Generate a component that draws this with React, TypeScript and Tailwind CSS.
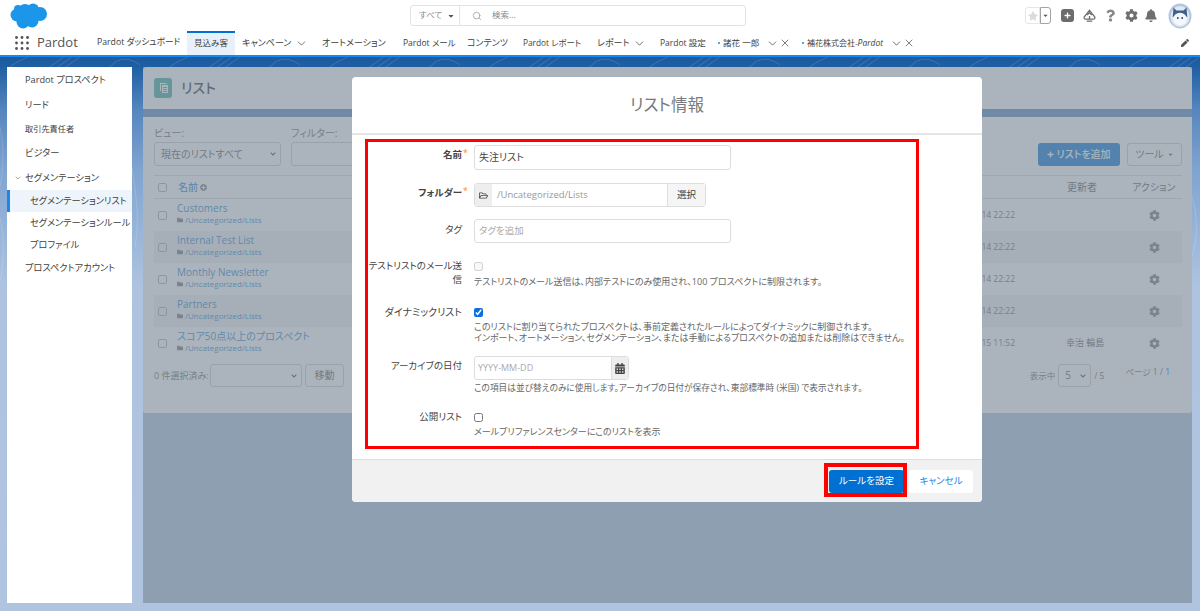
import { FaCalendarAlt, FaCaretDown, FaCog, FaFolder, FaPlus, FaQuestion, FaRegFolderOpen, FaStar, FaBell, FaPen, FaChevronDown, FaPlusCircle } from "react-icons/fa";
import { LuChevronDown, LuSearch, LuX } from "react-icons/lu";

const ROWS = [
  { name: "Customers", date: "2020-10-14 22:22", user: "" },
  { name: "Internal Test List", date: "2020-10-14 22:22", user: "" },
  { name: "Monthly Newsletter", date: "2020-10-14 22:22", user: "" },
  { name: "Partners", date: "2020-10-14 22:22", user: "" },
  { name: "スコア50点以上のプロスペクト", date: "2020-10-15 11:52", user: "幸治 輪島" },
];

function Logo() {
  return (
    <svg viewBox="0 0 37 27" className="h-[27px] w-[37px] shrink-0 fill-[#1b96e8]">
      <circle cx="15" cy="9" r="7" />
      <circle cx="23" cy="7.5" r="6" />
      <circle cx="30" cy="12" r="7" />
      <circle cx="7" cy="13" r="6.5" />
      <circle cx="13" cy="20" r="6.5" />
      <circle cx="22" cy="19" r="6.5" />
      <circle cx="8" cy="7" r="4" />
    </svg>
  );
}

function AppGrid() {
  return (
    <svg viewBox="0 0 14 14" className="h-[14px] w-[14px] fill-[#55524f]">
      {[1.5, 7, 12.5].map((y) =>
        [1.5, 7, 12.5].map((x) => <circle key={`${x}-${y}`} cx={x} cy={y} r="1.4" />),
      )}
    </svg>
  );
}

function TrailIcon() {
  return (
    <svg viewBox="0 0 14 14" className="h-[13px] w-[13px] fill-none stroke-[#706e6b] stroke-[1.4]">
      <path d="M7 1.500 12.600 8.500c.6 1.200 0 2.500-1.400 2.500H2.800c-1.400 0-2-1.300-1.400-2.500Z" />
      <path d="M4.500 6.500 7 4l2.500 2.500M7 11V7.500M4 13h6" />
    </svg>
  );
}

function Avatar() {
  return (
    <svg viewBox="0 0 24 26" className="h-[26px] w-[24px] shrink-0">
      <ellipse cx="12" cy="13" rx="11.500" ry="12.500" fill="#b4c6df" />
      <ellipse cx="12" cy="13.500" rx="9.500" ry="10.500" fill="#dfe8f3" />
      <path d="M5.500 4.500l3 3h7l3-3 .8 9.500H4.700Z" fill="#3f5f8f" />
      <ellipse cx="12" cy="16" rx="6.800" ry="6.200" fill="#f5f7fa" />
      <circle cx="9.800" cy="15" r=".9" fill="#24406c" />
      <circle cx="14.200" cy="15" r=".9" fill="#24406c" />
    </svg>
  );
}

function Waves() {
  return (
    <svg
      viewBox="0 0 1200 554"
      preserveAspectRatio="none"
      className="absolute inset-0 h-full w-full fill-none stroke-white/15"
    >
      {[0, 160, 320, 480, 640, 800, 960, 1120].map((x) => (
        <g key={x}>
          <path d={`M${x + 10} 10C${x + 20} 2 ${x + 30} 0 ${x + 36} -4`} />
          <path d={`M${x + 50} 10 ${x + 66} -2M${x + 58} 10 ${x + 74} -2M${x + 66} 10 ${x + 82} -2`} />
          <path d={`M${x + 110} 10C${x + 118} 0 ${x + 130} 0 ${x + 140} 8`} />
        </g>
      ))}
      <path d="M0 70C4 90 4 110 0 130M0 160C4 180 5 200 0 225M132 110C136 140 140 160 135 190M1192 140c6 20 6 40 0 60" />
    </svg>
  );
}

function NavChevron() {
  return <LuChevronDown className="h-[13px] w-[13px] shrink-0 text-[#55524f]" strokeWidth={1.500} />;
}

function TopHeader() {
  return (
    <header className="relative z-10 shrink-0 border-b-2 border-[#1589ee] bg-white">
      <div className="flex h-[31px] items-center pl-[10px]">
        <Logo />
        <div className="ml-[363px] flex h-[21px] w-[336px] shrink-0 rounded-[3px] border border-[#e3e3e3] text-[8.500px] text-[#8c8a87]">
          <div className="flex w-[49px] items-center gap-[5px] border-r border-[#e3e3e3] pl-[8px]">
            すべて
            <FaCaretDown className="h-[8px] w-[8px] text-[#55524f]" />
          </div>
          <div className="flex items-center gap-[10px] pl-[12px]">
            <LuSearch className="h-[10px] w-[10px] text-[#a5a3a0]" />
            検索...
          </div>
        </div>
        <div className="ml-[279px] flex h-[17px] shrink-0 items-stretch">
          <div className="flex w-[15px] items-center justify-center rounded-l-[3px] border border-[#e6e6e6]">
            <FaStar className="h-[10px] w-[10px] text-[#dddbda]" />
          </div>
          <div className="flex w-[11px] items-center justify-center rounded-r-[3px] border border-[#a5a3a0]">
            <FaCaretDown className="h-[7px] w-[7px] text-[#55524f]" />
          </div>
        </div>
        <div className="ml-[10px] flex h-[13px] w-[13px] shrink-0 items-center justify-center rounded-[3px] bg-[#6e6c6a]">
          <FaPlus className="h-[7px] w-[7px] text-white" />
        </div>
        <div className="ml-[9px]">
          <TrailIcon />
        </div>
        <FaQuestion className="ml-[10px] h-[13px] w-[9px] text-[#8a8886]" />
        <FaCog className="ml-[10px] h-[13px] w-[13px] text-[#706e6b]" />
        <FaBell className="ml-[7px] h-[13px] w-[12px] text-[#706e6b]" />
        <div className="ml-[11px]">
          <Avatar />
        </div>
      </div>
      <nav className="flex h-[24px] items-stretch pl-[15px] text-[9px] text-[#3e3e3c]">
        <div className="flex w-[22px] items-center">
          <AppGrid />
        </div>
        <span className="flex w-[60px] items-center text-[13px] font-normal text-[#55524f]">Pardot</span>
        <span className="flex w-[90px] items-center whitespace-nowrap text-[8.700px]">Pardot ダッシュボード</span>
        <span className="flex w-[48px] items-center justify-center border-t-2 border-[#0070d2] bg-[#e8f1fa] pb-[2px] text-[8.500px]">
          見込み客
        </span>
        <span className="ml-[7px] flex w-[80px] items-center gap-[4px] whitespace-nowrap">
          キャンペーン
          <NavChevron />
        </span>
        <span className="flex w-[81px] items-center whitespace-nowrap">オートメーション</span>
        <span className="flex w-[64px] items-center whitespace-nowrap text-[8.500px]">Pardot メール</span>
        <span className="flex w-[56px] items-center whitespace-nowrap">コンテンツ</span>
        <span className="flex w-[74px] items-center whitespace-nowrap text-[8.300px]">Pardot レポート</span>
        <span className="flex w-[63px] items-center gap-[4px] whitespace-nowrap">
          レポート
          <NavChevron />
        </span>
        <span className="flex w-[58px] items-center whitespace-nowrap text-[8.500px]">Pardot 設定</span>
        <span className="flex w-[84px] items-center whitespace-nowrap text-[8.500px]">
          <i className="mr-[3px] h-[2px] w-[2px] rounded-full bg-[#1589ee]" />
          諸花 一郎
          <span className="ml-[7px]"><NavChevron /></span>
          <LuX className="h-[12px] w-[12px] text-[#55524f]" strokeWidth={1.500} />
        </span>
        <span className="flex items-center whitespace-nowrap text-[8px]">
          <i className="mr-[3px] h-[2px] w-[2px] rounded-full bg-[#1589ee]" />
          補花株式会社-<em className="text-[8.500px]">Pardot</em>
          <span className="ml-[7px]"><NavChevron /></span>
          <LuX className="h-[12px] w-[12px] text-[#55524f]" strokeWidth={1.500} />
        </span>
        <span className="ml-auto flex items-center pr-[11px]">
          <FaPen className="h-[8px] w-[8px] text-[#55524f]" />
        </span>
      </nav>
    </header>
  );
}

function Sidebar() {
  const item = "flex h-[24.400px] items-center whitespace-nowrap";
  return (
    <aside className="relative w-[125px] shrink-0 bg-white pt-[1px] text-[9.200px] text-[#3e3e3c]">
      <div>
        <div className={`${item} pl-[18px]`}>Pardot プロスペクト</div>
        <div className={`${item} pl-[18px]`}>リード</div>
        <div className={`${item} pl-[18px] text-[8.200px]`}>取引先責任者</div>
        <div className={`${item} pl-[18px]`}>ビジター</div>
        <div className={`${item} gap-[3px] pl-[7px]`}>
          <LuChevronDown className="h-[8px] w-[8px] text-[#8c8a87]" />
          セグメンテーション
        </div>
        <div className="flex h-[22px] items-center border-l-[3px] border-[#1589ee] bg-[#eef4fb] pl-[20px] whitespace-nowrap">
          セグメンテーションリスト
        </div>
        <div className="flex h-[22px] items-center pl-[23px] whitespace-nowrap">セグメンテーションルール</div>
        <div className="flex h-[22px] items-center pl-[23px]">プロファイル</div>
        <div className={`${item} pl-[18px]`}>プロスペクトアカウント</div>
      </div>
    </aside>
  );
}

function Select({ className, label }: { className: string; label?: string }) {
  return (
    <div
      className={`flex items-center justify-between rounded-[3px] border border-[#ccc] bg-white pl-[6px] pr-[4px] text-[10px] text-[#555] ${className}`}
    >
      <span>{label}</span>
      <FaChevronDown className="h-[6px] w-[6px] text-[#333]" />
    </div>
  );
}

function ListPage() {
  return (
    <div className="flex h-full flex-col text-[10px]">
      <div className="flex h-[42px] shrink-0 items-start gap-[9px] rounded-t-[3px] bg-white pt-[11px] pl-[11px]">
        <div className="flex h-[20px] w-[18px] items-center justify-center rounded-[3px] bg-[#3ba79b]">
          <svg viewBox="0 0 12 12" className="h-[12px] w-[12px] fill-white">
            <path d="M3 1h6.500v1H4v7H3ZM5 3h6v8H5Zm1 2v1h4V5Zm0 2v1h4V7Zm0 2v1h4V9Z" fillRule="evenodd" />
          </svg>
        </div>
        <span className="pt-[1px] text-[14px] leading-[18px] font-medium text-[#333]">リスト</span>
      </div>
      <div className="mt-[8px] h-[296px] shrink-0 rounded-b-[3px] bg-white pr-[10px] pl-[11px]">
        <div className="flex h-[59px] border-b border-[#ddd] pt-[9px]">
          <div className="w-[137px]">
            <div className="h-[16px] text-[#666]">ビュー:</div>
            <Select className="h-[24px] w-[127px]" label="現在のリストすべて" />
          </div>
          <div>
            <div className="h-[16px] text-[#666]">フィルター:</div>
            <div className="h-[24px] w-[120px] rounded-[3px] border border-[#ccc]" />
          </div>
          <div className="ml-auto flex gap-[7px] pt-[17px]">
            <div className="flex h-[23px] w-[82px] items-center justify-center gap-[2px] rounded-[3px] bg-[#0070d2] font-medium text-white">
              <FaPlus className="h-[7px] w-[7px]" />
              リストを追加
            </div>
            <div className="flex h-[23px] w-[55px] items-center justify-center gap-[3px] rounded-[3px] border border-[#ccc] text-[#555]">
              ツール
              <FaCaretDown className="h-[7px] w-[7px]" />
            </div>
          </div>
        </div>
        <div className="flex h-[23px] items-center border-b border-[#ddd] text-[#555]">
          <i className="ml-[4px] h-[9px] w-[9px] rounded-[2px] border border-[#aaa]" />
          <span className="ml-[11px] flex flex-1 items-center gap-[2px] text-[#0070d2]">
            名前
            <FaPlusCircle className="h-[7px] w-[7px] text-[#777]" />
          </span>
          <span className="w-[65px]">更新者</span>
          <span className="w-[50px] whitespace-nowrap">アクション</span>
        </div>
        {ROWS.map((row, i) => (
          <div key={row.name} className={`flex h-[32px] items-center ${i % 2 === 1 ? "bg-[#f1f1f1]" : ""}`}>
            <i className="ml-[4px] h-[9px] w-[9px] shrink-0 rounded-[2px] border border-[#aaa]" />
            <div className="ml-[10px] flex-1 pb-[2px] leading-[12px]">
              <div className="text-[#2c7fc5]">{row.name}</div>
              <div className="flex items-center gap-[2px] text-[8px] text-[#2c7fc5]">
                <FaFolder className="h-[6px] w-[6px] text-[#777]" />
                /Uncategorized/Lists
              </div>
            </div>
            <span className="flex w-[120px] justify-end whitespace-nowrap pr-[51px] text-[8.500px] text-[#666]">{row.date}</span>
            <span className="w-[70px] text-[9px] text-[#555]">{row.user}</span>
            <span className="flex w-[46px] justify-start pl-[13px]">
              <FaCog className="h-[11px] w-[11px] text-[#777]" />
            </span>
          </div>
        ))}
        <div className="mt-[5px] flex items-start">
          <span className="mt-[5px] w-[56px] whitespace-nowrap text-[9px] text-[#666]">0 件選択済み:</span>
          <Select className="h-[23px] w-[92px]" />
          <div className="ml-[3px] flex h-[23px] w-[39px] items-center justify-center rounded-[3px] border border-[#ccc] text-[#555]">
            移動
          </div>
          <div className="ml-auto flex items-start pr-[12px] text-[8.500px] text-[#666]">
            <span className="mt-[6px] mr-[3px]">表示中</span>
            <Select className="h-[23px] w-[33px]" label="5" />
            <span className="mt-[6px] ml-[3px]">/ 5</span>
            <span className="mt-[2px] ml-[21px] whitespace-nowrap">
              ページ 1 / <span className="text-[#0070d2]">1</span>
            </span>
          </div>
        </div>
      </div>
    </div>
  );
}

function Check({ checked, disabled }: { checked?: boolean; disabled?: boolean }) {
  return (
    <input
      type="checkbox"
      defaultChecked={checked}
      disabled={disabled}
      className="h-[9px] w-[9px] accent-[#0b6fe0]"
    />
  );
}

function Row({
  label,
  required,
  className,
  labelClass = "",
  children,
}: {
  label: React.ReactNode;
  required?: boolean;
  className: string;
  labelClass?: string;
  children: React.ReactNode;
}) {
  return (
    <div className={`flex ${className}`}>
      <div
        className={`relative w-[110px] shrink-0 whitespace-nowrap pr-[12px] text-right text-[9.500px] leading-[14px] text-[#444] ${required ? "font-bold" : ""} ${labelClass}`}
      >
        {label}
        {required ? <span className="absolute top-[-2px] right-[6px] font-normal text-[#f0962e]">*</span> : null}
      </div>
      <div className="min-w-0 flex-1">{children}</div>
    </div>
  );
}

function Help({ children }: { children: React.ReactNode }) {
  return <div className="whitespace-nowrap text-[9px] leading-[11px] text-[#666]">{children}</div>;
}

function ListModal() {
  return (
    <div className="relative ml-[209px] flex h-[425px] w-[630px] flex-col rounded-[4px] bg-white">
      <h2 className="flex h-[58px] shrink-0 items-center justify-center border-b-2 border-[#e5e5e5] text-[16.500px] font-normal text-[#7a7a7a]">
        リスト情報
      </h2>
      <div className="h-[324px] shrink-0 pl-[12px] text-[10px]">
        <Row label="名前" required labelClass="mb-[5px]" className="mt-[10px] h-[25px] items-center">
          <div className="flex h-[25px] w-[257px] items-center rounded-[3px] border border-[#ddd] pl-[4px] text-[#444]">
            失注リスト
          </div>
        </Row>
        <Row label="フォルダー" required labelClass="mb-[4px]" className="mt-[13px] h-[24px] items-center">
          <div className="flex h-[24px] w-[232px] rounded-[3px] border border-[#ddd] text-[9.500px]">
            <div className="flex w-[17px] items-center justify-center bg-[#eee]">
              <FaRegFolderOpen className="h-[9px] w-[9px] text-[#444]" />
            </div>
            <div className="flex flex-1 items-center pl-[5px] text-[#999]">/Uncategorized/Lists</div>
            <div className="flex w-[38px] items-center justify-center border-l border-[#ddd] bg-[#f5f5f5] text-[#444]">
              選択
            </div>
          </div>
        </Row>
        <Row label="タグ" labelClass="mb-[2px]" className="mt-[12px] h-[24px] items-center">
          <div className="flex h-[24px] w-[257px] items-center rounded-[3px] border border-[#ddd] pl-[4px] text-[9.500px] text-[#aaa]">
            タグを追加
          </div>
        </Row>
        <Row
          label={
            <>
              テストリストのメール送
              <br />信
            </>
          }
          className="mt-[16px]"
        >
          <div className="flex h-[14px] items-center">
            <Check disabled />
          </div>
          <div className="mt-[3px]">
            <Help>テストリストのメール送信は、内部テストにのみ使用され、100 プロスペクトに制限されます。</Help>
          </div>
        </Row>
        <Row label="ダイナミックリスト" labelClass="text-[10px]" className="mt-[18px]">
          <div className="flex h-[14px] items-center">
            <Check checked />
          </div>
          <div className="mt-[2px]">
            <Help>このリストに割り当てられたプロスペクトは、事前定義されたルールによってダイナミックに制御されます。</Help>
            <Help>インポート、オートメーション、セグメンテーション、または手動によるプロスペクトの追加または削除はできません。</Help>
          </div>
        </Row>
        <Row label="アーカイブの日付" labelClass="pt-[3px]" className="mt-[13px]">
          <div className="flex h-[24px] w-[155px] rounded-[3px] border border-[#ddd]">
            <div className="flex flex-1 items-center pl-[3px] text-[9px] text-[#aaa]">YYYY-MM-DD</div>
            <div className="flex w-[17px] items-center justify-center border-l border-[#ddd] bg-[#eee]">
              <FaCalendarAlt className="h-[11px] w-[10px] text-[#444]" />
            </div>
          </div>
          <div className="mt-[2px]">
            <Help>
              <span className="text-[8.700px]">
                この項目は並び替えのみに使用します。アーカイブの日付が保存され、東部標準時 (米国) で表示されます。
              </span>
            </Help>
          </div>
        </Row>
        <Row label="公開リスト" className="mt-[16px]">
          <div className="flex h-[14px] items-center">
            <Check />
          </div>
          <div className="mt-[2px]">
            <Help>メールプリファレンスセンターにこのリストを表示</Help>
          </div>
        </Row>
      </div>
      <footer className="flex flex-1 items-center justify-end gap-[5px] rounded-b-[4px] border-t border-[#dedede] bg-[#f1f1f1] pr-[9px]">
        <button
          type="button"
          className="flex h-[23px] w-[75px] items-center justify-center rounded-[3px] bg-[#0070d2] text-[9.500px] text-white"
        >
          ルールを設定
        </button>
        <button
          type="button"
          className="flex h-[23px] w-[64px] items-center justify-center rounded-[3px] bg-white text-[9.500px] text-[#1589ee]"
        >
          キャンセル
        </button>
      </footer>
      {/* annotation frames drawn on top of the capture */}
      <div className="pointer-events-none absolute top-[62px] left-[13px] h-[310px] w-[554px] border-[3px] border-[#ff0000]" />
      <div className="pointer-events-none absolute top-[386px] left-[472px] h-[34px] w-[83px] border-[4px] border-[#ff0000]" />
    </div>
  );
}

export default function App() {
  return (
    <div className="flex h-screen w-full flex-col overflow-hidden bg-white font-['Open_Sans','Noto_Sans_CJK_JP',sans-serif] [font-feature-settings:'palt']">
      <TopHeader />
      <div className="relative flex min-h-0 flex-1 gap-[11px] bg-[linear-gradient(180deg,#1b5a9e_0px,#1f5fa3_10px,#5686be_53px,#7ea3d0_110px,#aec3e0_230px,#b0c4df_100%)] pt-[10px] pr-[8px] pb-[8px] pl-[7px]">
        <Waves />
        <Sidebar />
        <main className="relative min-w-0 flex-1">
          <ListPage />
          <div className="absolute inset-0 flex justify-start bg-[rgba(126,140,153,0.65)] pt-[10px]">
            <ListModal />
          </div>
        </main>
      </div>
    </div>
  );
}
